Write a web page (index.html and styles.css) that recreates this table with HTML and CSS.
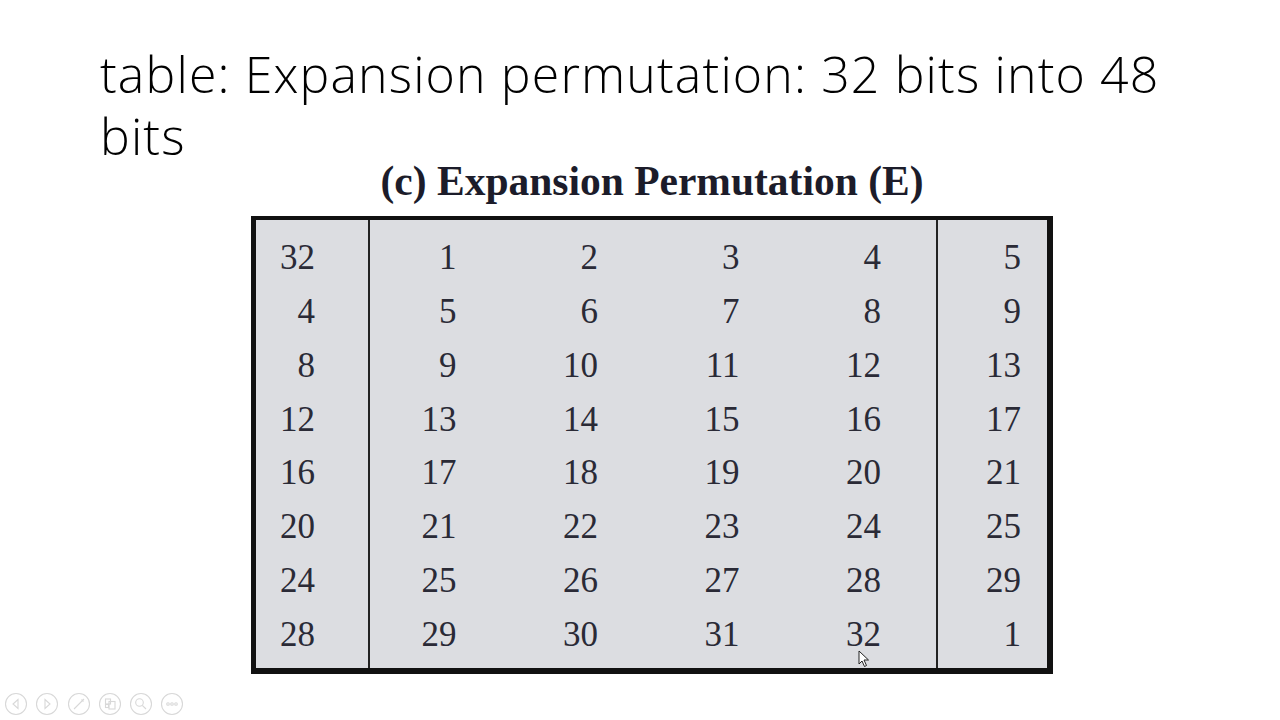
FILE: index.html
```html
<!DOCTYPE html>
<html>
<head>
<meta charset="utf-8">
<link rel="stylesheet" href="styles.css">
</head>
<body>
<div class="slide">
  <h1 class="title">table: Expansion permutation: 32 bits into 48 bits</h1>
  <div class="figure">
    <div class="caption">(c) Expansion Permutation (E)</div>
    <div class="etable">
      <div class="sec sec-left">
        <div class="cell">32</div><div class="cell">4</div><div class="cell">8</div><div class="cell">12</div>
        <div class="cell">16</div><div class="cell">20</div><div class="cell">24</div><div class="cell">28</div>
      </div>
      <div class="sec sec-mid">
        <div class="cell">1</div><div class="cell">2</div><div class="cell">3</div><div class="cell">4</div>
        <div class="cell">5</div><div class="cell">6</div><div class="cell">7</div><div class="cell">8</div>
        <div class="cell">9</div><div class="cell">10</div><div class="cell">11</div><div class="cell">12</div>
        <div class="cell">13</div><div class="cell">14</div><div class="cell">15</div><div class="cell">16</div>
        <div class="cell">17</div><div class="cell">18</div><div class="cell">19</div><div class="cell">20</div>
        <div class="cell">21</div><div class="cell">22</div><div class="cell">23</div><div class="cell">24</div>
        <div class="cell">25</div><div class="cell">26</div><div class="cell">27</div><div class="cell">28</div>
        <div class="cell">29</div><div class="cell">30</div><div class="cell">31</div><div class="cell">32</div>
      </div>
      <div class="sec sec-right">
        <div class="cell">5</div><div class="cell">9</div><div class="cell">13</div><div class="cell">17</div>
        <div class="cell">21</div><div class="cell">25</div><div class="cell">29</div><div class="cell">1</div>
      </div>
      <svg class="cursor" width="12" height="18" viewBox="0 0 12 18"><path d="M1 1 L1 14 L4 11 L6.5 16.5 L8.5 15.5 L6 10 L10.5 10 Z" fill="#fff" stroke="#222" stroke-width="1"/></svg>
    </div>
  </div>
  <div class="controls">
    <svg class="ctl" width="24" height="24" viewBox="0 0 24 24"><circle cx="12" cy="12" r="10.5"/><path d="M14 7.5 L9 12 L14 16.5 Z"/></svg>
    <svg class="ctl" width="24" height="24" viewBox="0 0 24 24"><circle cx="12" cy="12" r="10.5"/><path d="M10 7.5 L15 12 L10 16.5 Z"/></svg>
    <svg class="ctl" width="24" height="24" viewBox="0 0 24 24"><circle cx="12" cy="12" r="10.5"/><path d="M7 17 L15.5 8.5 L17 7 M7 17 L8.5 15.5 M14.5 7.5 L16.5 9.5"/></svg>
    <svg class="ctl" width="24" height="24" viewBox="0 0 24 24"><circle cx="12" cy="12" r="10.5"/><rect x="7.5" y="7" width="5" height="5"/><rect x="11" y="9.5" width="6" height="7.5"/><rect x="7.5" y="12.5" width="3" height="3"/></svg>
    <svg class="ctl" width="24" height="24" viewBox="0 0 24 24"><circle cx="12" cy="12" r="10.5"/><circle cx="10.5" cy="10.5" r="3.8"/><path d="M13.3 13.3 L17 17"/></svg>
    <svg class="ctl" width="24" height="24" viewBox="0 0 24 24"><circle cx="12" cy="12" r="10.5"/><circle cx="8" cy="12" r="1.3"/><circle cx="12" cy="12" r="1.3"/><circle cx="16" cy="12" r="1.3"/></svg>
  </div>
</div>
</body>
</html>
```
FILE: styles.css
```css
html, body {
  margin: 0;
  padding: 0;
  background: #ffffff;
}
.slide {
  width: 1280px;
  height: 720px;
  position: relative;
  overflow: hidden;
  background: #ffffff;
}
.title {
  margin: 0;
  padding: 43px 0 0 100px;
  width: 1090px;
  font-family: "Open Sans", "Liberation Sans", sans-serif;
  font-weight: 300;
  font-size: 50px;
  line-height: 62px;
  color: #000;
  letter-spacing: 1.15px;
}
.figure {
  margin: 0 0 0 251px;
  width: 802px;
}
.caption {
  text-align: center;
  font-family: "Liberation Serif", "Times New Roman", serif;
  font-weight: bold;
  font-size: 41.5px;
  line-height: 28px;
  color: #1c1c2a;
  margin-bottom: 21px;
}
.etable {
  position: relative;
  display: flex;
  background: #dcdde1;
  border-style: solid;
  border-color: #111;
  border-width: 4px 6px 6px 5px;
  box-sizing: border-box;
  height: 458px;
  padding: 11px 0 6px 0;
}
.sec {
  display: grid;
  grid-auto-rows: 53.86px;
  font-family: "Liberation Serif", "Times New Roman", serif;
  font-size: 35px;
  color: #2a2a36;
}
.sec-left {
  width: 112px;
  grid-template-columns: 1fr;
}
.sec-mid {
  width: 566px;
  grid-template-columns: repeat(4, 1fr);
  border-left: 2px solid #222;
  border-right: 2px solid #222;
  margin-top: -11px;
  padding-top: 11px;
  margin-bottom: -6px;
}
.sec-right {
  flex: 1;
  grid-template-columns: 1fr;
}
.cell {
  display: flex;
  align-items: center;
  justify-content: flex-end;
}
.sec-left .cell { padding-right: 53px; }
.sec-mid .cell { padding-right: 55px; }
.sec-right .cell { padding-right: 26px; }
.cursor {
  position: absolute;
  left: 602px;
  top: 430px;
}
.controls {
  position: absolute;
  left: 4px;
  top: 692px;
  display: flex;
  gap: 7.3px;
}
.ctl {
  fill: none;
  stroke: #d8d8d8;
  stroke-width: 1.1;
}
```
